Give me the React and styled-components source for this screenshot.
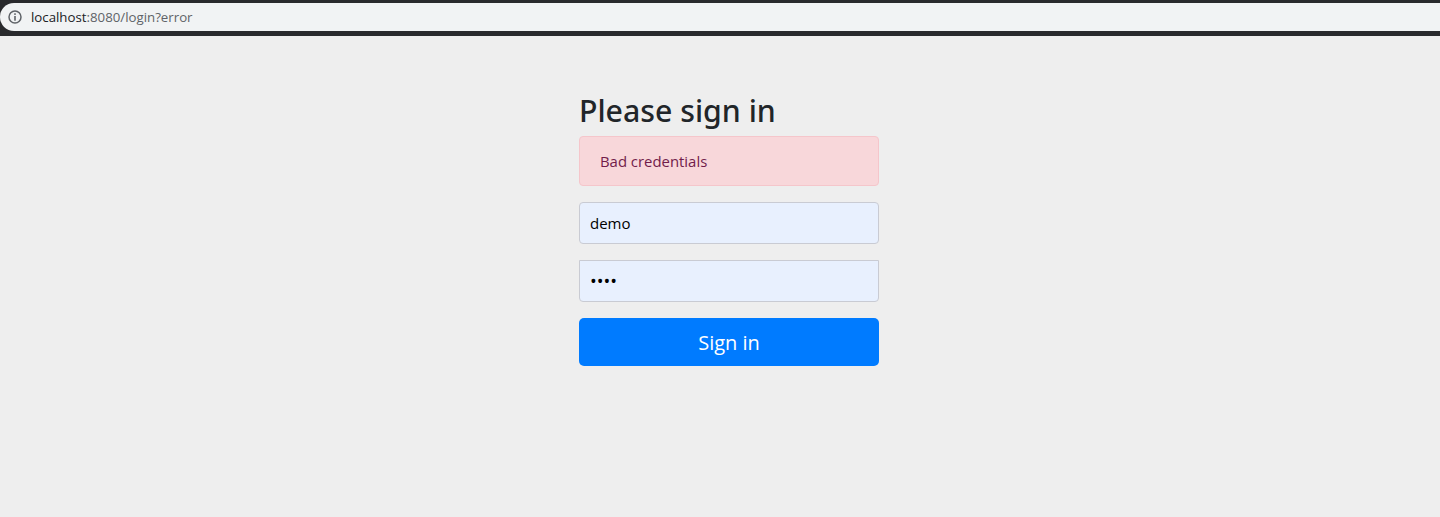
import React from "react";
import styled, { createGlobalStyle } from "styled-components";

const Global = createGlobalStyle`
  html, body { margin: 0; padding: 0; background: #eeeeee; }
  body { font-family: "Open Sans", "Noto Sans", sans-serif; min-height: 517px; }
`;

const BrowserBar = styled.header`
  height: 36px;
  box-sizing: border-box;
  background: #292a2d;
  padding: 3px 0 5px;
`;

const Omnibox = styled.div`
  height: 28px;
  background: #f1f3f4;
  border-radius: 14px 0 0 14px;
  display: flex;
  align-items: center;
  padding-left: 8px;
  gap: 9px;
`;

const Url = styled.span`
  font-family: "Open Sans", sans-serif;
  font-size: 13.25px;
  color: #5f6368;
`;

const Host = styled.span`
  color: #202124;
`;

const Main = styled.main`
  padding: 57px 0 0 579px;
`;

const Form = styled.form`
  width: 300px;
  display: flex;
  flex-direction: column;
`;

const Heading = styled.h2`
  margin: 0 0 8px;
  font-family: "Noto Sans", "Open Sans", sans-serif;
  font-size: 30.25px;
  font-weight: 500;
  line-height: 35px;
  color: #212529;
`;

const Alert = styled.div`
  box-sizing: border-box;
  height: 50px;
  margin-bottom: 16px;
  padding: 0 20px;
  display: flex;
  align-items: center;
  background: #f8d7da;
  border: 1px solid #f5c6cb;
  border-radius: 4px;
  color: #721c4a;
  font-size: 14.9px;
`;

const Field = styled.input`
  box-sizing: border-box;
  height: 42px;
  margin-bottom: 16px;
  padding: 0 10px;
  background: #e8f0fe;
  border: 1px solid #c9cbd3;
  border-radius: ${(p) => (p.$squareTop ? "0 0 4px 4px" : "4px")};
  color: #000;
  font-family: inherit;
  font-size: ${(p) => (p.$squareTop ? "18px" : "15px")};
  outline: none;
`;

const Submit = styled.button`
  height: 48px;
  border: 0;
  border-radius: 5px;
  background: #007bff;
  color: #fff;
  font-family: inherit;
  font-size: 20px;
`;

const InfoIcon = () => (
  <svg width="14" height="14" viewBox="0 0 14 14" fill="none" aria-hidden="true">
    <circle cx="7" cy="7" r="6" stroke="#5f6368" strokeWidth="1.5" />
    <rect x="6.2" y="3.3" width="1.6" height="1.6" fill="#5f6368" />
    <rect x="6.2" y="6" width="1.6" height="4.7" fill="#5f6368" />
  </svg>
);

export default function App() {
  return (
    <>
      <Global />
      <BrowserBar>
        <Omnibox>
          <InfoIcon />
          <Url>
            <Host>localhost</Host>:8080/login?error
          </Url>
        </Omnibox>
      </BrowserBar>
      <Main>
        <Form onSubmit={(e) => e.preventDefault()}>
          <Heading>Please sign in</Heading>
          <Alert>Bad credentials</Alert>
          <Field type="text" defaultValue="demo" />
          <Field type="password" defaultValue="demo" $squareTop />
          <Submit type="submit">Sign in</Submit>
        </Form>
      </Main>
    </>
  );
}
